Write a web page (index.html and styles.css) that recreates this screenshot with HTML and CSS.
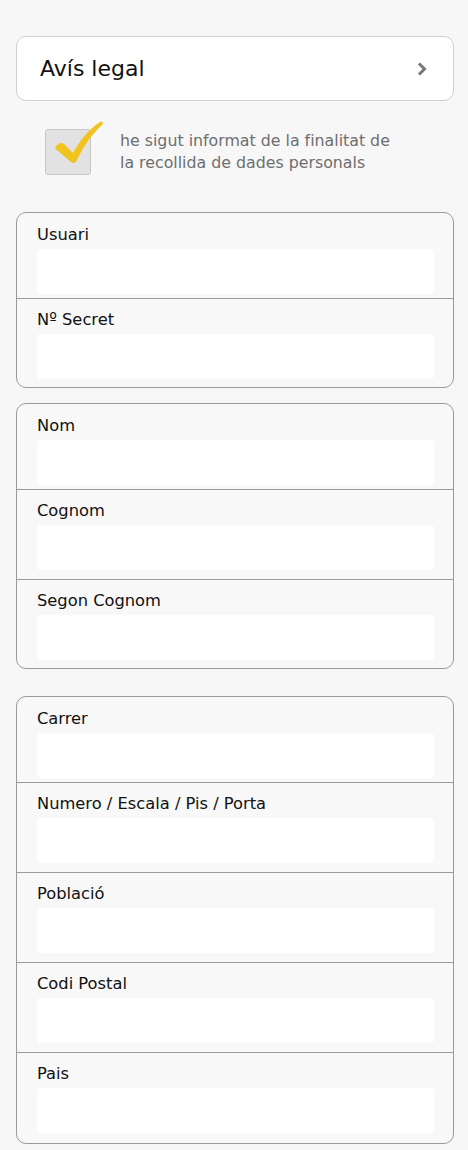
FILE: index.html
```html
<!DOCTYPE html>
<html lang="ca">
<head>
<meta charset="utf-8">
<title>Formulari</title>
<link rel="stylesheet" href="styles.css">
</head>
<body>
<div class="page">
  <div class="legal-card">
    <span class="legal-text">Avís legal</span>
    <svg class="chevron" width="10" height="14" viewBox="0 0 10 14"><path d="M2 1.5 L7.5 7 L2 12.5" fill="none" stroke="#777" stroke-width="3" stroke-linejoin="miter"/></svg>
  </div>

  <div class="consent">
    <div class="checkbox">
      <svg class="check" width="50" height="48" viewBox="0 0 50 48"><path d="M2 26 C5 23 8 22 10 24 L19 33 C26 20 35 9 46 2 C48 1 50 3 48 5 C38 14 29 27 23 40 C22 43 19 44 17 42 L3 30 C1 29 1 27 2 26 Z" fill="#f0c31f"/></svg>
    </div>
    <p class="consent-text">he sigut informat de la finalitat de<br>la recollida de dades personals</p>
  </div>

  <div class="group">
    <div class="row"><div class="label">Usuari</div><div class="input"></div></div>
    <div class="row"><div class="label">Nº Secret</div><div class="input"></div></div>
  </div>

  <div class="group group-2">
    <div class="row"><div class="label">Nom</div><div class="input"></div></div>
    <div class="row"><div class="label">Cognom</div><div class="input"></div></div>
    <div class="row"><div class="label">Segon Cognom</div><div class="input"></div></div>
  </div>

  <div class="group group-3">
    <div class="row"><div class="label">Carrer</div><div class="input"></div></div>
    <div class="row"><div class="label">Numero / Escala / Pis / Porta</div><div class="input"></div></div>
    <div class="row"><div class="label">Població</div><div class="input"></div></div>
    <div class="row"><div class="label">Codi Postal</div><div class="input"></div></div>
    <div class="row"><div class="label">Pais</div><div class="input"></div></div>
  </div>
</div>
</body>
</html>
```

FILE: styles.css
```css
html, body {
  margin: 0;
  padding: 0;
  background: #f7f7f7;
  font-family: "DejaVu Sans", Verdana, sans-serif;
  color: #111;
}

.page {
  padding: 36px 14px 0 16px;
  display: flex;
  flex-direction: column;
}

.legal-card {
  height: 63px;
  border: 1px solid #cfcfcf;
  border-radius: 10px;
  background: #fff;
  display: flex;
  align-items: center;
  justify-content: space-between;
  padding: 0 26px 0 23px;
}

.legal-text {
  font-size: 22px;
  line-height: 26px;
  color: #111;
}

.chevron {
  display: block;
  margin-top: 1px;
}

.consent {
  display: flex;
  align-items: center;
  margin: 28px 0 0 29px;
}

.checkbox {
  position: relative;
  width: 44px;
  height: 44px;
  border: 1px solid #c8c8c8;
  border-radius: 3px;
  background: #e2e2e2;
  flex-shrink: 0;
}

.check {
  position: absolute;
  left: 8px;
  top: -10px;
}

.consent-text {
  margin: 0 0 0 29px;
  font-size: 15.8px;
  line-height: 22px;
  color: #6e6e6e;
}

.group {
  margin-top: 37px;
  border: 1px solid #9a9a9a;
  border-radius: 10px;
  background: #f8f8f8;
  overflow: hidden;
}

.group-2 {
  margin-top: 15px;
}

.group-3 {
  margin-top: 27px;
}

.row {
  padding: 0 19px 9px 20px;
  border-top: 1px solid #9a9a9a;
}

.row:first-child {
  border-top: none;
  padding-bottom: 4px;
}

.row:last-child {
  padding-bottom: 8px;
}

.group-3 .row:last-child {
  padding-bottom: 10px;
}

.label {
  font-size: 16.3px;
  line-height: 20px;
  padding-top: 11px;
  height: 24px;
  color: #111;
}

.row:first-child .label {
  padding-top: 12px;
}

.input {
  height: 45px;
  background: #fff;
  border-radius: 4px;
}
```
